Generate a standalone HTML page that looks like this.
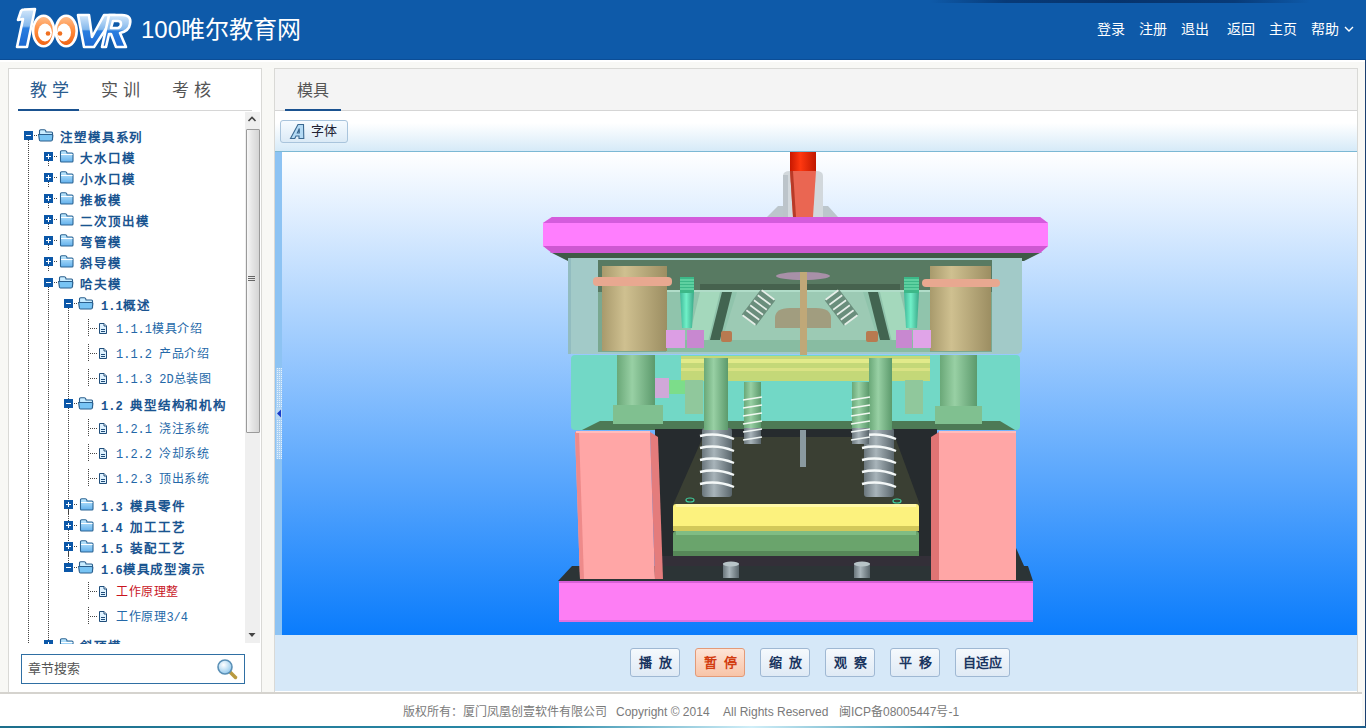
<!DOCTYPE html>
<html lang="zh-CN">
<head>
<meta charset="utf-8">
<style>
*{margin:0;padding:0;box-sizing:border-box}
html,body{width:1366px;height:728px;overflow:hidden}
body{position:relative;background:#f8f8f5;font-family:"Liberation Sans",sans-serif;}
.abs,.vd,.hd,.box,.ic,.tl{position:absolute}
#hdr{left:0;top:0;width:1366px;height:60px;background:#0e5aa9;border-bottom:1px solid #0b4d96}
#title{left:141px;top:15px;color:#fff;font-size:24px;line-height:30px;white-space:nowrap}
.nav{top:20px;color:#fff;font-size:14px;line-height:18px;white-space:nowrap}
#lp{left:8px;top:68px;width:254px;height:625px;background:#fff;border:1px solid #d9d9d6}
#rp{left:274px;top:68px;width:1084px;height:625px;background:#fff;border:1px solid #d9d9d6}
.tab{position:absolute;font-size:17px;line-height:20px;color:#555;white-space:nowrap;letter-spacing:5px}
#treeclip{position:absolute;left:9px;top:112px;width:236px;height:532px;overflow:hidden}
#tree{position:absolute;left:-9px;top:-112px;width:260px;height:760px}
.vd{width:1px;background:repeating-linear-gradient(#444 0 1px,transparent 1px 2px)}
.hd{height:1px;background:repeating-linear-gradient(90deg,#444 0 1px,transparent 1px 2px)}
.box{width:9px;height:9px;background:#0b57a8}
.box:after{content:"";position:absolute;left:2px;top:4px;width:5px;height:1px;background:#fff}
.box.plus:before{content:"";position:absolute;left:4px;top:2px;width:1px;height:5px;background:#fff}
.tl{white-space:nowrap;line-height:16px;color:#1d5c95}
.tl i{font-style:normal;font-family:"Liberation Mono",monospace}
.fb{font-weight:bold;font-size:12.5px;letter-spacing:0.9px;color:#1a5490}
.fb i{font-size:12px;letter-spacing:0}
.lf{font-size:12px;letter-spacing:0.6px;color:#2468a8}
.lf i{font-size:12px;letter-spacing:0}
.sel{color:#c8141e}
.ft{top:704px;font-size:12px;line-height:16px;color:#7a7a7a;white-space:nowrap}
.btn{position:absolute;top:648px;height:29px;border:1px solid #9fb8d3;border-radius:3px;background:linear-gradient(#f5f9fd,#dfeaf5);font-size:13px;font-weight:bold;color:#1a3560;text-align:center;line-height:27px;letter-spacing:7px;text-indent:7px}
</style>
</head>
<body>
<svg width="0" height="0" style="position:absolute">
<defs>
<linearGradient id="gfold" x1="0" y1="0" x2="0" y2="1"><stop offset="0" stop-color="#c4ebff"/><stop offset="1" stop-color="#62b0ec"/></linearGradient>
<symbol id="fclosed" viewBox="0 0 15 13"><path d="M1.5 3.5 L1.5 2 Q1.5 0.8 2.7 0.8 L6.3 0.8 Q7.5 0.8 7.8 2 L8 3 L13 3 Q14 3 14 4 L14 11 Q14 12 13 12 L2.5 12 Q1.5 12 1.5 11 Z" fill="url(#gfold)" stroke="#2d6594" stroke-width="1.1"/><path d="M2 4.5 L13.5 4.5" stroke="#fff" stroke-width="1"/></symbol>
<symbol id="fopen" viewBox="0 0 16 13"><path d="M1.5 10 L1.5 2 Q1.5 0.8 2.7 0.8 L6.3 0.8 Q7.5 0.8 7.8 2 L8 3 L13.5 3 Q14.5 3 14.5 4 L14.5 11" fill="#c8ecff" stroke="#2a5e8c" stroke-width="1.1"/><path d="M0.6 5.5 L13.5 5.5 Q15 5.5 14.8 7 L14.3 11 Q14.2 12 13 12 L2.5 12 Q1.5 12 1.4 11 Z" fill="#78c4f4" stroke="#2a5e8c" stroke-width="1.1"/></symbol>
<symbol id="doc" viewBox="0 0 10 11"><path d="M1.5 0.5 L6 0.5 L8.5 3 L8.5 10.5 L1.5 10.5 Z" fill="#dff2ff" stroke="#1f4d7a" stroke-width="1"/><path d="M6 0.5 L6 3 L8.5 3" fill="#fff" stroke="#1f4d7a" stroke-width="1"/><path d="M3 6.5 L7 6.5 M3 8.5 L7 8.5" stroke="#1f4d7a" stroke-width="1"/></symbol>
</defs>
</svg>

<div id="hdr" class="abs"></div><div class="abs" style="left:0;top:60px;width:1366px;height:2px;background:#fff"></div>
<div class="abs" style="left:930px;top:0;width:380px;height:3px;background:linear-gradient(90deg,rgba(0,20,60,0),rgba(0,20,60,.45) 20%,rgba(0,20,60,.55) 50%,rgba(0,20,60,.45) 80%,rgba(0,20,60,0))"></div>
<svg class="abs" style="left:12px;top:6px" width="124" height="46" viewBox="0 0 124 46">
<defs>
<linearGradient id="glb" x1="0" y1="0" x2="0" y2="1"><stop offset="0" stop-color="#d4e8fb"/><stop offset=".45" stop-color="#84b8ec"/><stop offset=".5" stop-color="#2a7ee0"/><stop offset="1" stop-color="#1a68d0"/></linearGradient>
<linearGradient id="glo" x1="0" y1="0" x2="0" y2="1"><stop offset="0" stop-color="#ffc090"/><stop offset=".5" stop-color="#ff8a3a"/><stop offset="1" stop-color="#f06010"/></linearGradient>
</defs>
<g stroke="#fff" stroke-width="2.6" stroke-linejoin="round">
<path d="M9 5 Q10 3.5 12 3.5 L23 3 L15 41 L5 41 L11 13 L6 14 Z" fill="url(#glb)"/>
<path d="M66 9 L77 9 L80 31 L92 9 L103 9 L82 41 L72 41 Z" fill="url(#glb)"/>
<path d="M90 41 L97 9 L110 9 Q120 9 118 18 Q117 25 108 27 L114 41 L104 41 L99 28 L97 28 L94 41 Z M99 22 L106 22 Q109 21 109 18 Q109 15 106 15 L101 15 Z" fill="url(#glb)" fill-rule="evenodd"/>
<ellipse cx="54.2" cy="25" rx="10.5" ry="15.3" fill="url(#glo)"/>
<ellipse cx="31.6" cy="25" rx="10.5" ry="15.3" fill="url(#glo)"/>
</g>
<ellipse cx="33" cy="26.5" rx="7" ry="9" fill="#fff"/>
<ellipse cx="52" cy="26.5" rx="7" ry="9" fill="#fff"/>
<circle cx="36" cy="27.5" r="2.3" fill="#f07020"/>
<circle cx="48" cy="27.5" r="2.3" fill="#f07020"/>
</svg>

<div id="title" class="abs">100唯尔教育网</div>
<div class="abs nav" style="left:1097px">登录</div>
<div class="abs nav" style="left:1139px">注册</div>
<div class="abs nav" style="left:1181px">退出</div>
<div class="abs nav" style="left:1227px">返回</div>
<div class="abs nav" style="left:1269px">主页</div>
<div class="abs nav" style="left:1311px">帮助</div>
<svg class="abs" style="left:1343px;top:25px" width="12" height="8"><path d="M2 2 L6 6 L10 2" fill="none" stroke="#fff" stroke-width="1.4"/></svg>

<div id="lp" class="abs"></div>
<div class="tab" style="left:30px;top:80.5px;color:#2a5c8f">教学</div>
<div class="tab" style="left:100.5px;top:80.5px">实训</div>
<div class="tab" style="left:171.5px;top:80.5px">考核</div>
<div class="abs" style="left:18px;top:110px;width:234px;height:1px;background:#d6d6d6"></div>
<div class="abs" style="left:18px;top:109px;width:61px;height:2px;background:#1a5290"></div>

<div id="treeclip"><div id="tree">
<div class="vd" style="left:28px;top:140px;height:505px"></div>
<div class="vd" style="left:48px;top:287px;height:358px"></div>
<div class="vd" style="left:68px;top:308px;height:260px"></div>
<div class="box minus" style="left:24px;top:131px"></div>
<div class="hd" style="left:34px;top:135px;width:4px"></div>
<svg class="ic" style="left:38px;top:129px" width="16" height="13"><use href="#fopen"/></svg>
<div class="tl fb" style="left:60px;top:130px">注塑模具系列</div>
<div class="vd" style="left:48px;top:161px;height:6px"></div>
<div class="box plus" style="left:44px;top:152px"></div>
<div class="hd" style="left:54px;top:156px;width:4px"></div>
<svg class="ic" style="left:59px;top:150px" width="15" height="13"><use href="#fclosed"/></svg>
<div class="tl fb" style="left:80px;top:151px">大水口模</div>
<div class="vd" style="left:48px;top:182px;height:6px"></div>
<div class="box plus" style="left:44px;top:173px"></div>
<div class="hd" style="left:54px;top:177px;width:4px"></div>
<svg class="ic" style="left:59px;top:171px" width="15" height="13"><use href="#fclosed"/></svg>
<div class="tl fb" style="left:80px;top:172px">小水口模</div>
<div class="vd" style="left:48px;top:203px;height:6px"></div>
<div class="box plus" style="left:44px;top:194px"></div>
<div class="hd" style="left:54px;top:198px;width:4px"></div>
<svg class="ic" style="left:59px;top:192px" width="15" height="13"><use href="#fclosed"/></svg>
<div class="tl fb" style="left:80px;top:193px">推板模</div>
<div class="vd" style="left:48px;top:224px;height:6px"></div>
<div class="box plus" style="left:44px;top:215px"></div>
<div class="hd" style="left:54px;top:219px;width:4px"></div>
<svg class="ic" style="left:59px;top:213px" width="15" height="13"><use href="#fclosed"/></svg>
<div class="tl fb" style="left:80px;top:214px">二次顶出模</div>
<div class="vd" style="left:48px;top:245px;height:6px"></div>
<div class="box plus" style="left:44px;top:236px"></div>
<div class="hd" style="left:54px;top:240px;width:4px"></div>
<svg class="ic" style="left:59px;top:234px" width="15" height="13"><use href="#fclosed"/></svg>
<div class="tl fb" style="left:80px;top:235px">弯管模</div>
<div class="vd" style="left:48px;top:266px;height:6px"></div>
<div class="box plus" style="left:44px;top:257px"></div>
<div class="hd" style="left:54px;top:261px;width:4px"></div>
<svg class="ic" style="left:59px;top:255px" width="15" height="13"><use href="#fclosed"/></svg>
<div class="tl fb" style="left:80px;top:256px">斜导模</div>
<div class="box minus" style="left:44px;top:278px"></div>
<div class="hd" style="left:54px;top:282px;width:4px"></div>
<svg class="ic" style="left:58px;top:276px" width="16" height="13"><use href="#fopen"/></svg>
<div class="tl fb" style="left:80px;top:277px">哈夫模</div>
<div class="box minus" style="left:64px;top:299px"></div>
<div class="hd" style="left:74px;top:303px;width:4px"></div>
<svg class="ic" style="left:78px;top:297px" width="16" height="13"><use href="#fopen"/></svg>
<div class="tl fb" style="left:101px;top:298px"><i>1.1</i>概述</div>
<div class="vd" style="left:88px;top:319px;height:18px"></div>
<div class="hd" style="left:90px;top:328px;width:8px"></div>
<svg class="ic" style="left:98px;top:323px" width="10" height="11"><use href="#doc"/></svg>
<div class="tl lf" style="left:116px;top:321px"><i>1.1.1</i>模具介绍</div>
<div class="vd" style="left:88px;top:344px;height:18px"></div>
<div class="hd" style="left:90px;top:353px;width:8px"></div>
<svg class="ic" style="left:98px;top:348px" width="10" height="11"><use href="#doc"/></svg>
<div class="tl lf" style="left:116px;top:346px"><i>1.1.2 </i>产品介绍</div>
<div class="vd" style="left:88px;top:369px;height:18px"></div>
<div class="hd" style="left:90px;top:378px;width:8px"></div>
<svg class="ic" style="left:98px;top:373px" width="10" height="11"><use href="#doc"/></svg>
<div class="tl lf" style="left:116px;top:371px"><i>1.1.3 2D</i>总装图</div>
<div class="box minus" style="left:64px;top:399px"></div>
<div class="hd" style="left:74px;top:403px;width:4px"></div>
<svg class="ic" style="left:78px;top:397px" width="16" height="13"><use href="#fopen"/></svg>
<div class="tl fb" style="left:101px;top:398px"><i>1.2 </i>典型结构和机构</div>
<div class="vd" style="left:88px;top:419px;height:18px"></div>
<div class="hd" style="left:90px;top:428px;width:8px"></div>
<svg class="ic" style="left:98px;top:423px" width="10" height="11"><use href="#doc"/></svg>
<div class="tl lf" style="left:116px;top:421px"><i>1.2.1 </i>浇注系统</div>
<div class="vd" style="left:88px;top:444px;height:18px"></div>
<div class="hd" style="left:90px;top:453px;width:8px"></div>
<svg class="ic" style="left:98px;top:448px" width="10" height="11"><use href="#doc"/></svg>
<div class="tl lf" style="left:116px;top:446px"><i>1.2.2 </i>冷却系统</div>
<div class="vd" style="left:88px;top:469px;height:18px"></div>
<div class="hd" style="left:90px;top:478px;width:8px"></div>
<svg class="ic" style="left:98px;top:473px" width="10" height="11"><use href="#doc"/></svg>
<div class="tl lf" style="left:116px;top:471px"><i>1.2.3 </i>顶出系统</div>
<div class="vd" style="left:68px;top:509px;height:6px"></div>
<div class="box plus" style="left:64px;top:500px"></div>
<div class="hd" style="left:74px;top:504px;width:4px"></div>
<svg class="ic" style="left:79px;top:498px" width="15" height="13"><use href="#fclosed"/></svg>
<div class="tl fb" style="left:101px;top:499px"><i>1.3 </i>模具零件</div>
<div class="vd" style="left:68px;top:530px;height:6px"></div>
<div class="box plus" style="left:64px;top:521px"></div>
<div class="hd" style="left:74px;top:525px;width:4px"></div>
<svg class="ic" style="left:79px;top:519px" width="15" height="13"><use href="#fclosed"/></svg>
<div class="tl fb" style="left:101px;top:520px"><i>1.4 </i>加工工艺</div>
<div class="vd" style="left:68px;top:551px;height:6px"></div>
<div class="box plus" style="left:64px;top:542px"></div>
<div class="hd" style="left:74px;top:546px;width:4px"></div>
<svg class="ic" style="left:79px;top:540px" width="15" height="13"><use href="#fclosed"/></svg>
<div class="tl fb" style="left:101px;top:541px"><i>1.5 </i>装配工艺</div>
<div class="box minus" style="left:64px;top:563px"></div>
<div class="hd" style="left:74px;top:567px;width:4px"></div>
<svg class="ic" style="left:78px;top:561px" width="16" height="13"><use href="#fopen"/></svg>
<div class="tl fb" style="left:101px;top:562px"><i>1.6</i>模具成型演示</div>
<div class="vd" style="left:88px;top:582px;height:18px"></div>
<div class="hd" style="left:90px;top:591px;width:8px"></div>
<svg class="ic" style="left:98px;top:586px" width="10" height="11"><use href="#doc"/></svg>
<div class="tl lf sel" style="left:116px;top:584px">工作原理整</div>
<div class="vd" style="left:88px;top:607px;height:18px"></div>
<div class="hd" style="left:90px;top:616px;width:8px"></div>
<svg class="ic" style="left:98px;top:611px" width="10" height="11"><use href="#doc"/></svg>
<div class="tl lf" style="left:116px;top:609px">工作原理<i>3/4</i></div>
<div class="vd" style="left:48px;top:649px;height:6px"></div>
<div class="box plus" style="left:44px;top:640px"></div>
<div class="hd" style="left:54px;top:644px;width:4px"></div>
<svg class="ic" style="left:59px;top:638px" width="15" height="13"><use href="#fclosed"/></svg>
<div class="tl fb" style="left:80px;top:639px">斜顶模</div>
</div></div>

<!-- scrollbar -->
<div class="abs" style="left:245px;top:112px;width:15px;height:531px;background:#efefef"></div>
<svg class="abs" style="left:247px;top:115px" width="10" height="8"><path d="M1.5 6 L5 2.5 L8.5 6" fill="none" stroke="#444" stroke-width="1.6"/></svg>
<div class="abs" style="left:246px;top:129px;width:14px;height:304px;border:1px solid #9a9a9a;border-radius:1px;background:linear-gradient(90deg,#f7f7f7,#e6e6e6 40%,#d4d4d4)"></div>
<div class="abs" style="left:248px;top:276px;width:7px;height:1px;background:#666;box-shadow:0 2px 0 #666,0 4px 0 #666"></div>
<svg class="abs" style="left:247px;top:631px" width="10" height="8"><path d="M1.5 2 L8.5 2 L5 6 Z" fill="#444"/></svg>

<!-- search -->
<div class="abs" style="left:21px;top:654px;width:224px;height:30px;border:1px solid #2f6fa3;background:#fff"></div>
<div class="abs" style="left:28px;top:661px;font-size:13px;line-height:16px;color:#555">章节搜索</div>
<svg class="abs" style="left:215px;top:657px" width="24" height="24"><defs><radialGradient id="gmag" cx=".4" cy=".35" r=".7"><stop offset="0" stop-color="#fff"/><stop offset="1" stop-color="#8cc6ec"/></radialGradient></defs><path d="M14.5 14.5 L20.5 20.5" stroke="#b89a40" stroke-width="3.5" stroke-linecap="round"/><circle cx="10" cy="10" r="7" fill="url(#gmag)" stroke="#5a8fb5" stroke-width="1.6"/></svg>

<div id="rp" class="abs"></div>
<div class="abs" style="left:275px;top:69px;width:1082px;height:41px;background:#f4f4f4"></div>
<div class="abs" style="left:275px;top:110px;width:1082px;height:1px;background:#d5d5d5"></div>
<div class="tab" style="left:297px;top:81px;letter-spacing:0;font-size:16px">模具</div>
<div class="abs" style="left:285px;top:108.5px;width:56px;height:2.5px;background:#1a5290"></div>
<div class="abs" style="left:275px;top:111px;width:1082px;height:40px;background:linear-gradient(#fff 30%,#d6eaf8)"></div>
<div class="abs" style="left:275px;top:151px;width:1082px;height:1px;background:#7bb8d4"></div>
<div class="abs" style="left:280px;top:120px;width:68px;height:23px;border:1px solid #a9c4dc;border-radius:3px;background:linear-gradient(#f6fbff,#dbeaf6)"></div>
<svg class="abs" style="left:288px;top:122px" width="18" height="19"><path d="M2.5 16.5 L10 2.5 L15.5 2.5 L15.8 16.5 L11 16.5 L11 14 L8 14 L6.8 16.5 Z M9.3 11 L11.3 11 L11.3 6.5 Z" fill="#b4daf4" stroke="#3a6890" stroke-width="1.1" fill-rule="evenodd"/></svg>
<div class="abs" style="left:311px;top:123px;font-size:13px;line-height:16px;color:#223">字体</div>

<!-- viewer -->
<div class="abs" style="left:275px;top:152px;width:7px;height:483px;background:#8dc3f3"></div>
<svg class="abs" style="left:275px;top:368px" width="7" height="91"><defs><pattern id="pdot" width="2" height="2" patternUnits="userSpaceOnUse"><rect width="2" height="2" fill="#a8d0f4"/><rect x="0" y="0" width="1" height="1" fill="#e4f0fc"/></pattern></defs><rect x="1" y="0" width="6" height="91" fill="url(#pdot)"/><rect x="1" y="40" width="6" height="11" fill="#b8d8f4"/></svg>
<svg class="abs" style="left:276px;top:409px" width="6" height="9"><path d="M5 0.5 L1 4.5 L5 8.5Z" fill="#1a3cc8"/></svg>
<div class="abs" style="left:282px;top:152px;width:1075px;height:483px;background:linear-gradient(#ffffff,#0a7cfc)"></div>
<svg class="abs" style="left:282px;top:152px" width="1075" height="483" viewBox="282 152 1075 483">
<defs>
<linearGradient id="cylTan" x1="0" x2="1"><stop offset="0" stop-color="#a89a6c"/><stop offset=".35" stop-color="#cfc090"/><stop offset="1" stop-color="#9c8e62"/></linearGradient>
<linearGradient id="cylGrn" x1="0" x2="1"><stop offset="0" stop-color="#6aa878"/><stop offset=".4" stop-color="#98d0a4"/><stop offset="1" stop-color="#5c9a6c"/></linearGradient>
<linearGradient id="cylGry" x1="0" x2="1"><stop offset="0" stop-color="#6a767c"/><stop offset=".4" stop-color="#a8b4ba"/><stop offset="1" stop-color="#5a666c"/></linearGradient>
<linearGradient id="cylTeal" x1="0" x2="1"><stop offset="0" stop-color="#40b898"/><stop offset=".45" stop-color="#70f0c8"/><stop offset="1" stop-color="#3aa888"/></linearGradient>
<linearGradient id="cylRed" x1="0" x2="1"><stop offset="0" stop-color="#c81800"/><stop offset=".4" stop-color="#ff3810"/><stop offset="1" stop-color="#c01800"/></linearGradient>
</defs>
<!-- sprue bushing -->
<path d="M767 217 L778 206 L828 206 L838 217 Z" fill="#bcc6cc"/>
<path d="M783 217 L783 176 Q783 171 790 171 L816 171 Q823 171 823 176 L823 217 Z" fill="#d2d8dc"/>
<rect x="783" y="175" width="5" height="42" fill="#bcc4ca"/>
<rect x="790" y="152" width="26" height="20" fill="url(#cylRed)"/>
<path d="M790 171 L816 171 L813 217 L793 217 Z" fill="#ea6652"/><path d="M790 171 L793 171 L796 217 L793 217 Z" fill="#b83a28"/>
<!-- top clamp plate underside -->
<path d="M550 252 L1042 252 L1024 261 L568 261 Z" fill="#3e5a46"/>
<!-- A plate translucent box -->
<path d="M568 258 L1022 258 L1022 348 Q1022 354 1016 354 L574 354 Q568 354 568 348 Z" fill="#a2cac8"/>
<rect x="568" y="258" width="3" height="96" fill="#92bcc0"/>
<rect x="598" y="260" width="394" height="32" fill="#587a62"/>
<rect x="700" y="284" width="200" height="8" fill="#46624e"/>
<rect x="598" y="292" width="68" height="60" fill="#7aa890"/>
<rect x="930" y="292" width="62" height="60" fill="#7aa890"/>
<!-- central translucent slab -->
<rect x="666" y="290" width="264" height="62" fill="#90c4ac"/>
<rect x="666" y="290" width="264" height="2" fill="#b0dcc8"/>
<path d="M700 292 L720 292 L706 350 L686 350 Z" fill="#a4d8bc"/><path d="M722 292 L732 292 L718 348 L708 348 Z" fill="#426450"/>
<path d="M880 292 L900 292 L914 350 L894 350 Z" fill="#a4d8bc"/><path d="M868 292 L878 292 L892 348 L882 348 Z" fill="#426450"/>
<path d="M737 292 L863 292 L878 340 L722 340 Z" fill="#9ccab4"/>
<rect x="666" y="340" width="264" height="12" fill="#88bca2"/>
<!-- springs angled top -->
<path d="M756.2 325.4 L775.2 300.4 L760.8 289.6 L741.8 314.6 Z" fill="#5e7e6e" opacity=".8"/>
<path d="M755.4 324.8 L742.6 315.2 M759.2 319.8 L746.4 310.2 M763.0 314.8 L750.2 305.2 M766.8 309.8 L754.0 300.2 M770.6 304.8 L757.8 295.2 M774.4 299.8 L761.6 290.2" stroke="#e6eee8" stroke-width="1.7" fill="none"/>
<path d="M858.2 314.6 L839.2 289.6 L824.8 300.4 L843.8 325.4 Z" fill="#5e7e6e" opacity=".8"/>
<path d="M857.4 315.2 L844.6 324.8 M853.6 310.2 L840.8 319.8 M849.8 305.2 L837.0 314.8 M846.0 300.2 L833.2 309.8 M842.2 295.2 L829.4 304.8 M838.4 290.2 L825.6 299.8" stroke="#e6eee8" stroke-width="1.7" fill="none"/>
<!-- sprue puller -->
<ellipse cx="803" cy="276" rx="27" ry="4" fill="#a890a8"/>
<path d="M775 328 L775 318 Q775 308 790 308 L816 308 Q831 308 831 318 L831 328 Z" fill="#a48a68" opacity=".7"/>
<rect x="800" y="272" width="7" height="90" fill="#c0a878"/><rect x="800" y="362" width="6" height="105" fill="#98b098"/>
<!-- guide bushings -->
<rect x="602" y="266" width="65" height="85" fill="url(#cylTan)"/>
<rect x="593" y="277" width="79" height="9" rx="4" fill="#e8a890"/>
<rect x="930" y="266" width="61" height="85" fill="url(#cylTan)"/>
<rect x="922" y="279" width="78" height="8" rx="4" fill="#e8a890"/>
<!-- teal screws -->
<path d="M680 292 L694 292 L692 328 L682 328 Z" fill="url(#cylTeal)"/><rect x="680" y="277" width="14" height="16" fill="#3cb888"/><path d="M680 280 L694 280 M680 283 L694 283 M680 286 L694 286 M680 289 L694 289" stroke="#80e8b8" stroke-width="1"/>
<path d="M904 292 L919 292 L917 328 L906 328 Z" fill="url(#cylTeal)"/><rect x="904" y="277" width="15" height="16" fill="#3cb888"/><path d="M904 280 L919 280 M904 283 L919 283 M904 286 L919 286 M904 289 L919 289" stroke="#80e8b8" stroke-width="1"/>
<!-- purple blocks -->
<rect x="666" y="330" width="19" height="18" fill="#dc9ee4"/><rect x="687" y="330" width="17" height="18" fill="#c888d0"/>
<rect x="896" y="330" width="16" height="18" fill="#c888d0"/><rect x="913" y="330" width="18" height="18" fill="#e0a4e8"/>
<rect x="721" y="331" width="11" height="11" rx="2" fill="#b87a50"/>
<rect x="866" y="331" width="12" height="11" rx="2" fill="#b87a50"/>
<!-- B plate -->
<rect x="571" y="355" width="449" height="75" rx="4" fill="#72d8c6"/>
<rect x="681" y="356" width="249" height="25" fill="#c4d878"/>
<rect x="681" y="359" width="249" height="4" fill="#e2ea8a"/>
<rect x="681" y="368" width="249" height="3" fill="#dae284"/>
<rect x="640" y="380" width="60" height="14" fill="#80e070" opacity=".7"/>
<path d="M600 421 L1000 421 L1015 430 L582 430 Z" fill="#4d7a55"/>
<!-- guide pillars -->
<rect x="617" y="355" width="38" height="52" fill="url(#cylGrn)"/>
<rect x="613" y="405" width="50" height="19" fill="#80c090"/>
<rect x="940" y="355" width="37" height="52" fill="url(#cylGrn)"/>
<rect x="935" y="406" width="47" height="18" fill="#80c090"/>
<!-- small parts left/right in B plate -->
<rect x="655" y="378" width="14" height="20" fill="#d0a8d8"/>
<rect x="685" y="380" width="18" height="34" fill="#90c89c"/>
<rect x="905" y="380" width="18" height="34" fill="#90c89c"/>
<!-- dark interior -->
<rect x="655" y="429" width="282" height="152" fill="#262b2e"/>
<path d="M703 437 L895 437 L920 505 L673 505 Z" fill="#3a3f33"/>
<rect x="660" y="556" width="275" height="25" fill="#332f38"/>
<path d="M572 566 L1028 566 L1033 581 L558 581 Z" fill="#2c3436"/>
<!-- pink blocks -->
<path d="M575 432 L650 432 L655 579 L580 579 Z" fill="#ffa6a6"/>
<path d="M575 432 L579 432 L584 579 L580 579 Z" fill="#ee8a8a"/>
<path d="M650 432 L658 437 L663 579 L655 579 Z" fill="#e47c7c"/>
<rect x="576" y="431" width="74" height="2" fill="#ffbcbc"/>
<path d="M939 432 L1016 432 L1016 580 L939 580 Z" fill="#ffa6a6"/>
<path d="M931 437 L939 432 L939 580 L931 580 Z" fill="#e07474"/>
<rect x="939" y="431" width="77" height="2" fill="#ffbcbc"/>
<path d="M1016 548 L1029 577 L1016 577 Z" fill="#2c3436"/>
<!-- springs lower -->
<rect x="702" y="428" width="30" height="69" rx="3" fill="url(#cylGry)"/>
<rect x="864" y="428" width="30" height="69" rx="3" fill="url(#cylGry)"/>
<g stroke="#f4f8f8" stroke-width="2.4" fill="none">
<path d="M700 436 Q717 432 734 439 M700 448 Q717 444 734 451 M700 460 Q717 456 734 463 M700 472 Q717 468 734 475 M700 484 Q717 480 734 487"/>
<path d="M862 436 Q879 432 896 439 M862 448 Q879 444 896 451 M862 460 Q879 456 896 463 M862 472 Q879 468 896 475 M862 484 Q879 480 896 487"/>
</g>
<!-- return pins upper -->
<rect x="704" y="358" width="24" height="72" fill="url(#cylGrn)"/>
<rect x="869" y="358" width="23" height="72" fill="url(#cylGrn)"/>
<rect x="744" y="382" width="17" height="50" fill="url(#cylGrn)"/>
<rect x="852" y="382" width="17" height="50" fill="url(#cylGrn)"/>
<g stroke="#f0f8f0" stroke-width="1.6" fill="none">
<path d="M743 400 L762 397 M743 408 L762 405 M743 416 L762 413 M743 424 L762 421"/>
<path d="M851 400 L870 397 M851 408 L870 405 M851 416 L870 413 M851 424 L870 421"/>
</g>
<rect x="744" y="428" width="17" height="16" fill="url(#cylGry)"/>
<rect x="852" y="428" width="17" height="16" fill="url(#cylGry)"/>
<g stroke="#f0f6f4" stroke-width="1.6" fill="none">
<path d="M743 432 L762 429 M743 440 L762 437"/>
<path d="M851 432 L870 429 M851 440 L870 437"/>
</g>
<rect x="800" y="430" width="6" height="37" fill="#8a9aa0"/>
<!-- ejector plates -->
<rect x="673" y="504" width="246" height="27" rx="3" fill="#fcf27e"/>
<rect x="676" y="504" width="240" height="3" fill="#fff8a8"/>
<rect x="673" y="526" width="246" height="5" fill="#d2c85a"/>
<rect x="673" y="531" width="246" height="25" rx="3" fill="#6aa46c"/>
<rect x="676" y="531" width="240" height="4" fill="#80bc84"/>
<rect x="673" y="551" width="246" height="5" fill="#568858"/>
<ellipse cx="690" cy="500" rx="4" ry="2" fill="none" stroke="#40d0a0" stroke-width="1.2"/>
<ellipse cx="897" cy="501" rx="4" ry="2" fill="none" stroke="#40d0a0" stroke-width="1.2"/>
<!-- stop pins -->
<rect x="723" y="563" width="16" height="15" fill="url(#cylGry)"/>
<ellipse cx="731" cy="564" rx="8" ry="2.5" fill="#b8c4c8"/>
<rect x="854" y="563" width="16" height="15" fill="url(#cylGry)"/>
<ellipse cx="862" cy="564" rx="8" ry="2.5" fill="#b8c4c8"/>
<!-- bottom plate -->
<rect x="559" y="581" width="474" height="41" fill="#fd7ef4"/>
<rect x="559" y="581" width="474" height="2" fill="#d860d8"/>
<rect x="559" y="620" width="474" height="2" fill="#e070e0"/>
<!-- top clamp plate -->
<path d="M552 217 L1040 217 L1048 223 L1048 246 L1040 253 L552 253 L543 246 L543 223 Z" fill="#ff7efe"/>
<path d="M552 217 L1040 217 L1048 223 L543 223 Z" fill="#d45cdc"/>
<path d="M543 246 L1048 246 L1040 253 L552 253 Z" fill="#ce58d2"/>
</svg>

<div class="abs" style="left:275px;top:635px;width:1082px;height:56px;background:#d6e8f8"></div>
<div class="btn" style="left:630px;width:50px">播放</div>
<div class="btn" style="left:695px;width:50px;background:linear-gradient(#fde4d6,#f8c4a8);border-color:#e39a78;color:#d23c10">暂停</div>
<div class="btn" style="left:760px;width:50px">缩放</div>
<div class="btn" style="left:825px;width:50px">观察</div>
<div class="btn" style="left:890px;width:50px">平移</div>
<div class="btn" style="left:955px;width:55px;letter-spacing:0;text-indent:0">自适应</div>

<div class="abs" style="left:0;top:692px;width:1362px;height:2px;background:#d5d3ce"></div>
<div class="abs" style="left:0;top:694px;width:1362px;height:32px;background:#fff"></div>
<div class="abs ft" style="left:403px">版权所有：厦门凤凰创壹软件有限公司</div><div class="abs ft" style="left:616px">Copyright © 2014</div><div class="abs ft" style="left:723px">All Rights Reserved</div><div class="abs ft" style="left:839px">闽ICP备08005447号-1</div>
<div class="abs" style="left:1365px;top:60px;width:1px;height:668px;background:#1b3f70"></div>
<div class="abs" style="left:0;top:726px;width:1366px;height:2px;background:linear-gradient(90deg,#1d6f8c,#2a8aa8 40%,#d0eef8 55%,#2a8aa8 70%,#1d5f8c)"></div>
</body>
</html>
